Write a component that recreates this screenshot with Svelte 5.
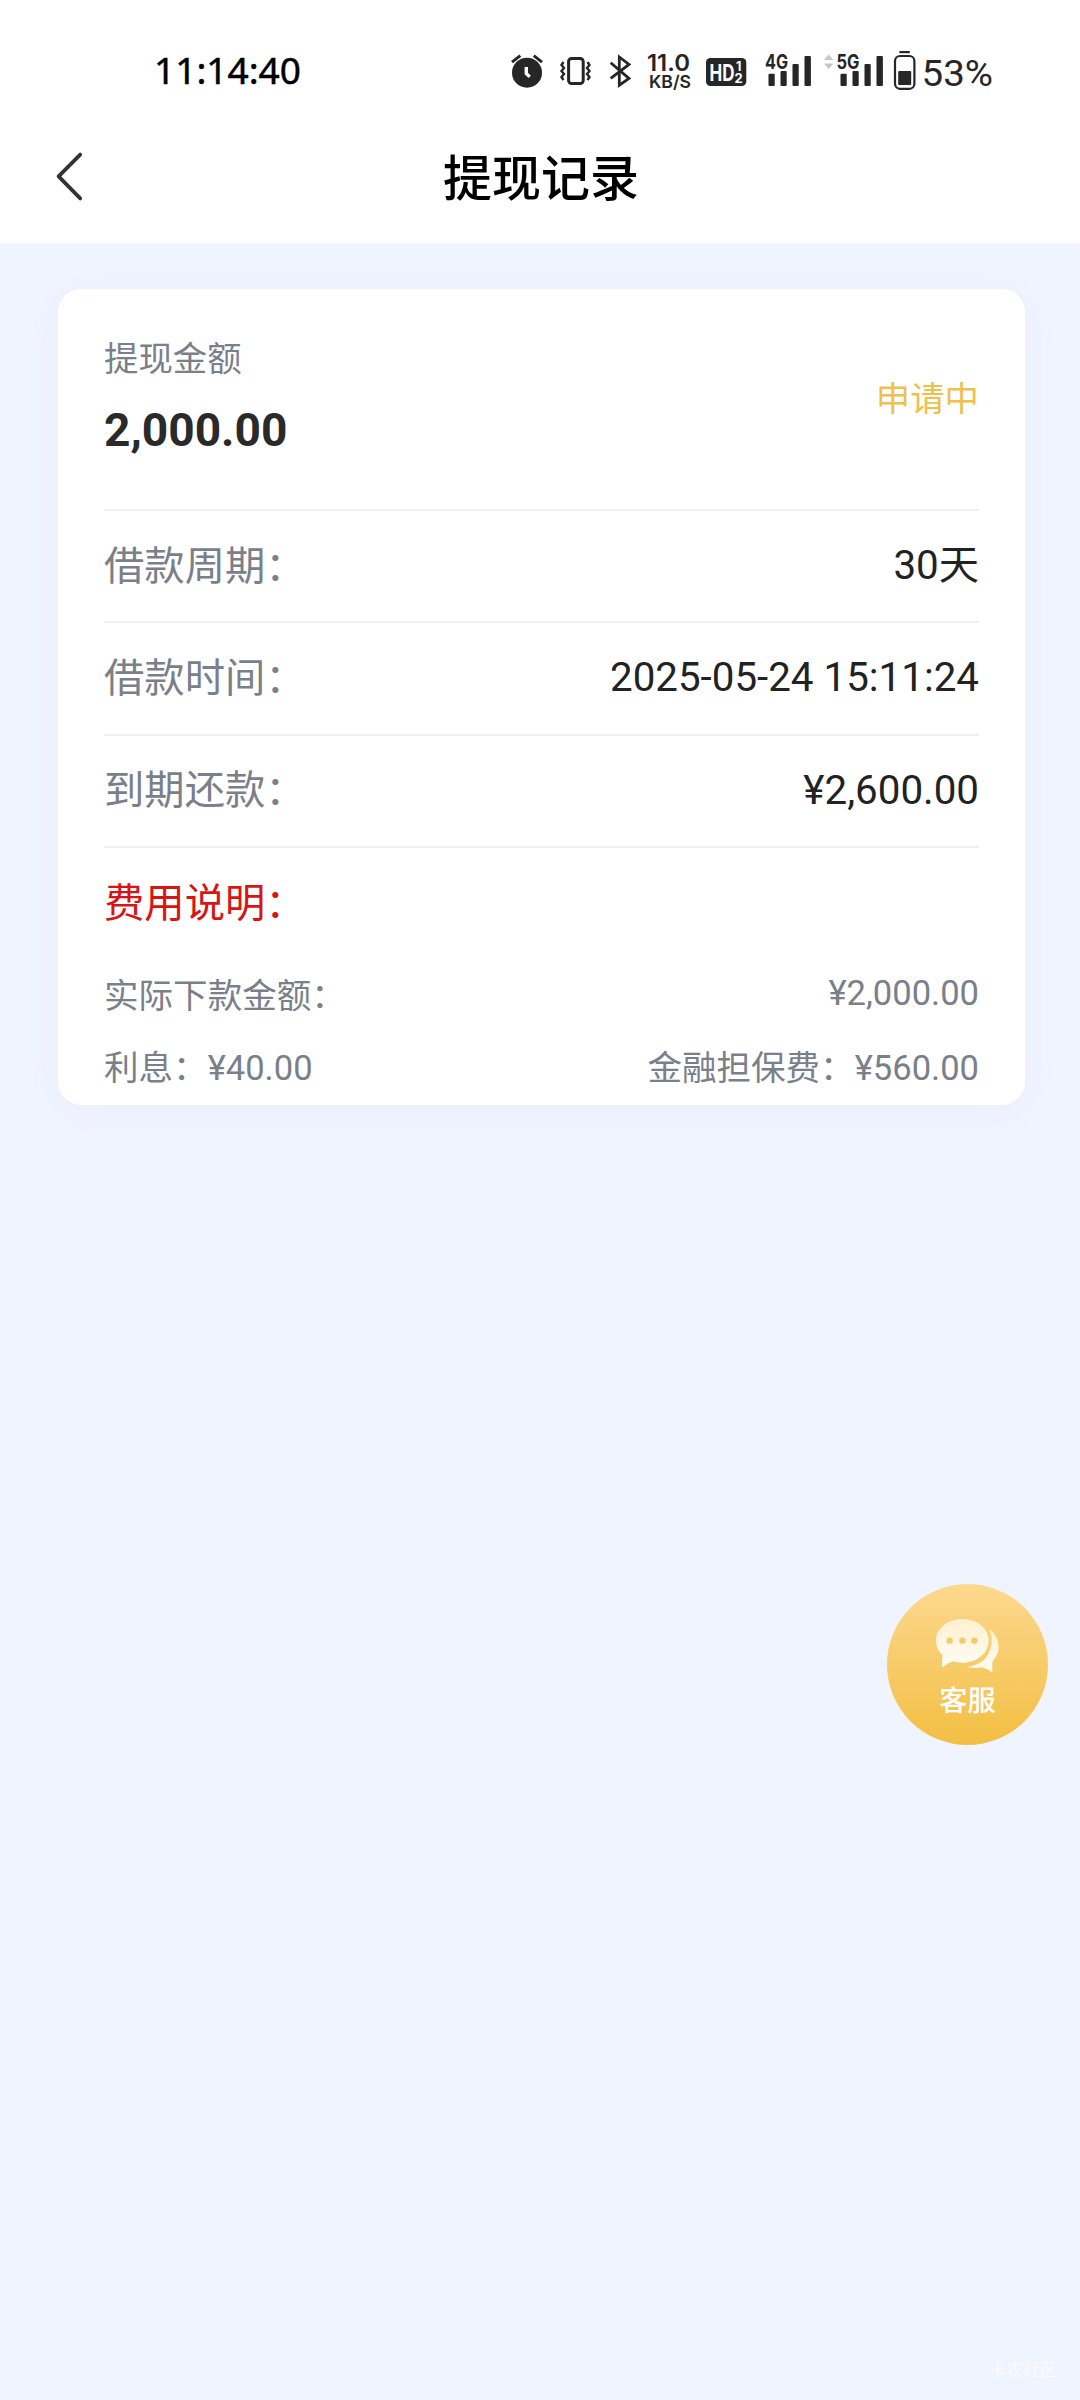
<!-- Withdrawal record detail page with a floating customer service button. -->
<script lang="ts">
	interface Row {
		label: string;
		value: string;
	}

	const rows: Row[] = [
		{ label: '借款周期：', value: '30天' },
		{ label: '借款时间：', value: '2025-05-24 15:11:24' },
		{ label: '到期还款：', value: '¥2,600.00' }
	];
</script>

<div class="page" lang="zh-CN">
	<header>
		<div class="status-bar">
			<svg class="clock" width="156" height="44" viewBox="146 50 156 44">
				<text x="154" y="84" font-size="37.3" textLength="147" lengthAdjust="spacingAndGlyphs">11:14:40</text>
			</svg>
			<div class="indicators">
				<svg class="alarm" width="34" height="44" viewBox="510 50 34 44">
					<circle cx="527" cy="72.7" r="15" />
					<path class="line" d="M512 62.2 520.3 55.6M533.8 55.6 542 62.2" stroke-width="3" />
					<path d="M526.3 67v6.5l3.4 3.4" fill="none" stroke="#fff" stroke-width="3.4" />
				</svg>
				<svg class="vibrate" width="32" height="44" viewBox="560 50 32 44">
					<rect class="line" x="568.6" y="58.4" width="14.6" height="25.2" rx="3" stroke-width="3" />
					<path
						class="line"
						d="M563.5 62l-2 3 2.5 3-2.5 3 2.5 3-2.5 3 2 3M587.5 62l2 3-2.5 3 2.5 3-2.5 3 2.5 3-2 3"
						stroke-width="2.4"
					/>
				</svg>
				<svg class="bluetooth" width="22" height="44" viewBox="609 50 22 44">
					<path
						class="line"
						d="M610.7 62.7 629 78.4 619.3 85.2V57L629 64.4 610.7 78.4"
						stroke-width="2.8"
					/>
				</svg>
				<svg class="speed" width="44" height="44" viewBox="647 50 44 44">
					<text x="647" y="71" font-size="23" font-weight="600" textLength="43" lengthAdjust="spacingAndGlyphs">11.0</text>
					<text x="649" y="88.3" font-size="17.4" font-weight="600" textLength="42" lengthAdjust="spacingAndGlyphs">KB/S</text>
				</svg>
				<svg class="hd" width="41" height="44" viewBox="706 50 41 44">
					<rect x="706" y="58" width="40.3" height="28" rx="4.5" />
					<g fill="#fff" font-weight="700">
						<text x="709.5" y="80.5" font-size="22.5" textLength="25" lengthAdjust="spacingAndGlyphs">HD</text>
						<text x="736" y="71" font-size="12.5">1</text>
						<text x="734.5" y="82.8" font-size="13">2</text>
					</g>
				</svg>
				<svg class="signal-4g" width="48" height="44" viewBox="764 50 48 44">
					<text x="765" y="69.3" font-size="20" font-weight="700" textLength="23" lengthAdjust="spacingAndGlyphs">4G</text>
					<rect x="768.5" y="73.7" width="6.2" height="12.3" rx="1" />
					<rect x="780.5" y="71" width="6.2" height="15" rx="1" />
					<rect x="792.5" y="64" width="6.2" height="22" rx="1" />
					<rect x="804.5" y="56" width="6.4" height="30" rx="1" />
				</svg>
				<svg class="signal-5g" width="60" height="44" viewBox="824 50 60 44">
					<path d="M824 60 828.7 54.5 833.4 60ZM824 63.4h9.4L828.7 69Z" fill="#c6c6c6" />
					<text x="836.5" y="69.3" font-size="20" font-weight="700" textLength="23" lengthAdjust="spacingAndGlyphs">5G</text>
					<rect x="840.5" y="73.7" width="6.2" height="12.3" rx="1" />
					<rect x="852.5" y="71" width="6.2" height="15" rx="1" />
					<rect x="864.5" y="64" width="6.2" height="22" rx="1" />
					<rect x="876.5" y="56" width="6.4" height="30" rx="1" />
				</svg>
				<svg class="battery" width="22" height="44" viewBox="894 50 22 44">
					<rect x="899.4" y="51" width="10.4" height="2.2" />
					<rect class="line" x="895" y="56" width="19.4" height="32.8" rx="5" stroke-width="2.2" />
					<rect x="898.2" y="71" width="13" height="14" rx="1" />
				</svg>
				<svg class="percent" width="72" height="44" viewBox="921 50 72 44">
					<text x="921.5" y="86" font-size="36" textLength="71.5" lengthAdjust="spacingAndGlyphs">53%</text>
				</svg>
			</div>
		</div>
		<div class="nav-bar">
			<button class="back" type="button" aria-label="返回">
				<svg width="28" height="50" viewBox="54 151 28 50">
					<path
						d="M78.2 154.6 56.6 176.4 78.2 198.4"
						fill="none"
						stroke="#333"
						stroke-width="3.8"
						stroke-linecap="round"
						stroke-linejoin="round"
					/>
				</svg>
			</button>
			<h1>提现记录</h1>
		</div>
	</header>

	<main>
		<section class="card">
			<div class="summary">
				<div>
					<div class="summary-label">提现金额</div>
					<div class="summary-amount">2,000.00</div>
				</div>
				<span class="state">申请中</span>
			</div>
			{#each rows as row}
				<div class="row">
					<span class="label">{row.label}</span>
					<span>{row.value}</span>
				</div>
			{/each}
			<div class="row fee-title"><span class="label">费用说明：</span></div>
			<div class="fee">
				<span class="fee-label">实际下款金额：</span>
				<span class="fee-value">¥2,000.00</span>
			</div>
			<div class="fee">
				<span>利息：¥40.00</span>
				<span>金融担保费：¥560.00</span>
			</div>
		</section>
	</main>

	<button class="service" type="button">
		<svg width="64" height="56" viewBox="228 172 192 168">
			<defs>
				<linearGradient id="bubble" x1="0" y1="0" x2="0" y2="1">
					<stop offset="0" stop-color="#fff0cf" />
					<stop offset="1" stop-color="#fffdf8" />
				</linearGradient>
			</defs>
			<path
				d="M307 175c44 0 79 28 79 65s-35 66-79 66c-10 0-20-1-28-4-11 4-22 10-33 19 0-13 0-25 2-37-13-12-20-27-20-44 0-37 35-65 79-65Z"
				fill="url(#bubble)"
			/>
			<path
				d="M387 205c19 13 30 34 29 58-1 14-8 27-18 37-2 12-1 23-1 36-10-8-20-13-31-16-15 3-31 3-46-1 29-4 50-15 61-33 17-27 18-55 6-81Z"
				fill="url(#bubble)"
			/>
			<g fill="#f6ca6d">
				<circle cx="269" cy="240" r="9.5" />
				<circle cx="307" cy="240" r="9.5" />
				<circle cx="343" cy="240" r="9.5" />
			</g>
		</svg>
		<span>客服</span>
	</button>

	<span class="watermark">卡农社区</span>
</div>

<style>
	:global(body) {
		background: #f0f4ff;
	}

	.page {
		position: relative;
		height: 2400px;
		overflow: hidden;
		background: #f0f4ff;
		color: #222;
		font-family: Roboto, 'Noto Sans CJK SC', sans-serif;
	}

	button {
		padding: 0;
		border: none;
		background: none;
		font-family: inherit;
		cursor: pointer;
	}

	svg {
		display: block;
		flex: none;
		overflow: visible;
	}

	header {
		height: 243px;
		background: #fff;
	}

	.status-bar {
		display: flex;
		justify-content: space-between;
		padding: 50px 87px 0 146px;
		font-family: Inter, sans-serif;
	}
	.status-bar svg {
		fill: #262626;
	}
	.status-bar .clock {
		fill: #000;
		stroke: #000;
		stroke-width: 0.5;
		font-family: 'Noto Sans', sans-serif;
	}
	.status-bar .line {
		fill: none;
		stroke: #262626;
	}

	.indicators {
		display: flex;
	}
	.vibrate,
	.speed {
		margin-left: 16px;
	}
	.bluetooth,
	.signal-4g {
		margin-left: 17px;
	}
	.hd {
		margin-left: 15px;
	}
	.signal-5g {
		margin-left: 12px;
	}
	.battery {
		margin-left: 10px;
	}
	.percent {
		margin-left: 5px;
		font-family: Roboto, sans-serif;
	}

	.nav-bar {
		display: grid;
		grid-template-columns: 140px 1fr 140px;
		align-items: center;
		height: 164px;
	}
	.back {
		margin-left: 56px;
		width: 28px;
	}

	h1 {
		margin: 0;
		padding: 7px 0 0 2px;
		font-size: 48.96px;
		font-weight: 500;
		line-height: 72px;
		text-align: center;
		color: #000;
	}

	main {
		padding: 46px 55px 0 58px;
	}

	.card {
		padding: 46px;
		padding-bottom: 1px;
		border-radius: 23px;
		background: #fff;
		box-shadow: 0 6px 40px rgba(90, 80, 190, 0.04);
	}

	.summary {
		display: flex;
		justify-content: space-between;
		align-items: center;
		padding-bottom: 52px;
	}
	.summary-label {
		padding-top: 1px;
		font-size: 34.4px;
		line-height: 46px;
		color: #7b7f8a;
	}
	.summary-amount {
		margin-top: 21px;
		font-size: 46.08px;
		font-weight: 700;
		line-height: 54px;
		color: #2a2a2a;
	}

	.state {
		padding-top: 5px;
		font-size: 34.4px;
		line-height: 46px;
		color: #efc04c;
	}

	.row {
		display: flex;
		justify-content: space-between;
		align-items: center;
		box-sizing: border-box;
		height: 112.3px;
		border-top: 2px solid #f0f0f0;
		font-size: 40.32px;
		line-height: 56px;
	}
	.label {
		padding-top: 1px;
		color: #7b7f8a;
	}
	.fee-title .label {
		padding-top: 2px;
		color: #d91414;
	}

	.fee {
		display: flex;
		justify-content: space-between;
		align-items: center;
		height: 73px;
		font-size: 34.56px;
		line-height: 46px;
		color: #7b7f8a;
	}
	.fee-label {
		padding-top: 2px;
	}
	.fee-value {
		padding-bottom: 3px;
	}

	.service {
		position: absolute;
		top: 1584px;
		right: 32px;
		display: flex;
		flex-direction: column;
		align-items: center;
		width: 161px;
		height: 161px;
		padding-top: 34px;
		border-radius: 50%;
		background: linear-gradient(#fdd88f, #f2bf42);
		color: #fff;
		font-size: 28.2px;
		font-weight: 500;
		line-height: 40px;
	}
	.service span {
		margin-top: 8px;
	}

	.watermark {
		position: absolute;
		right: 23px;
		bottom: 18px;
		font-size: 17px;
		line-height: 24px;
		color: rgba(255, 255, 255, 0.65);
	}
</style>
